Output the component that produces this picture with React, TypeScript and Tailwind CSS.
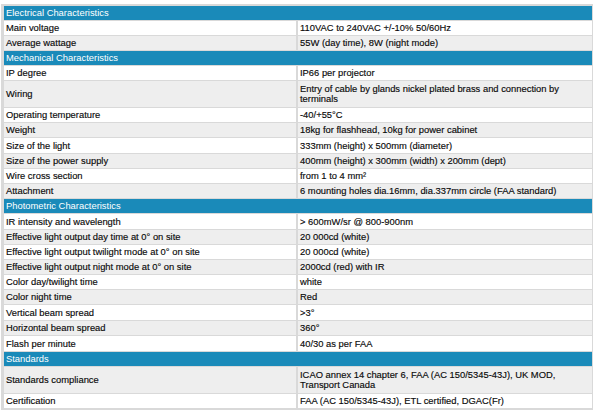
import React from "react";

type Row =
  | { kind: "h"; label: string; h: number }
  | { kind: "d"; label: string; value: React.ReactNode; h: number; alt: boolean };

const rows: Row[] = [
  { kind: "h", label: "Electrical Characteristics", h: 14 },
  { kind: "d", label: "Main voltage", value: "110VAC to 240VAC +/-10% 50/60Hz", h: 14, alt: false },
  { kind: "d", label: "Average wattage", value: "55W (day time), 8W (night mode)", h: 14, alt: true },
  { kind: "h", label: "Mechanical Characteristics", h: 14 },
  { kind: "d", label: "IP degree", value: "IP66 per projector", h: 14, alt: false },
  {
    kind: "d",
    label: "Wiring",
    value: (
      <>
        Entry of cable by glands nickel plated brass and connection by
        <br />
        terminals
      </>
    ),
    h: 26,
    alt: true,
  },
  { kind: "d", label: "Operating temperature", value: "-40/+55°C", h: 14, alt: false },
  { kind: "d", label: "Weight", value: "18kg for flashhead, 10kg for power cabinet", h: 14, alt: true },
  { kind: "d", label: "Size of the light", value: "333mm (height) x 500mm (diameter)", h: 15, alt: false },
  { kind: "d", label: "Size of the power supply", value: "400mm (height) x 300mm (width) x 200mm (dept)", h: 14, alt: true },
  { kind: "d", label: "Wire cross section", value: "from 1 to 4 mm²", h: 14, alt: false },
  { kind: "d", label: "Attachment", value: "6 mounting holes dia.16mm, dia.337mm circle (FAA standard)", h: 14, alt: true },
  { kind: "h", label: "Photometric Characteristics", h: 14 },
  { kind: "d", label: "IR intensity and wavelength", value: "> 600mW/sr @ 800-900nm", h: 15, alt: false },
  { kind: "d", label: "Effective light output day time at 0° on site", value: "20 000cd (white)", h: 14, alt: true },
  { kind: "d", label: "Effective light output twilight mode at 0° on site", value: "20 000cd (white)", h: 14, alt: false },
  { kind: "d", label: "Effective light output night mode at 0° on site", value: "2000cd (red) with IR", h: 14, alt: true },
  { kind: "d", label: "Color day/twilight time", value: "white", h: 14, alt: false },
  { kind: "d", label: "Color night time", value: "Red", h: 14, alt: true },
  { kind: "d", label: "Vertical beam spread", value: ">3°", h: 15, alt: false },
  { kind: "d", label: "Horizontal beam spread", value: "360°", h: 14, alt: true },
  { kind: "d", label: "Flash per minute", value: "40/30 as per FAA", h: 15, alt: false },
  { kind: "h", label: "Standards", h: 14 },
  {
    kind: "d",
    label: "Standards compliance",
    value: (
      <>
        ICAO annex 14 chapter 6, FAA (AC 150/5345-43J), UK MOD,
        <br />
        Transport Canada
      </>
    ),
    h: 26,
    alt: true,
  },
  { kind: "d", label: "Certification", value: "FAA (AC 150/5345-43J), ETL certified, DGAC(Fr)", h: 14, alt: false },
];

export default function App() {
  return (
    <div
      className="w-[600px] h-[420px] bg-white pt-[4px] pl-[1px]"
      style={{ fontFamily: '"Liberation Sans", Arial, sans-serif' }}
    >
      <div className="w-[592px] bg-[#d9d9d9] pt-[2px] pb-[2px] pl-[3px] pr-[1px] flex flex-col gap-px text-[9.4px] leading-[10px] text-[#0a0a0a]">
        {rows.map((r, i) =>
          r.kind === "h" ? (
            <div
              key={i}
              className="bg-[#1a8ab9] text-white flex items-center pl-[2px]"
              style={{ height: r.h }}
            >
              {r.label}
            </div>
          ) : (
            <div
              key={i}
              className="flex gap-[2px] [-webkit-text-stroke:0.15px_#0a0a0a]"
              style={{ height: r.h }}
            >
              <div
                className={`w-[292px] shrink-0 flex items-center pl-[2px] ${
                  r.alt ? "bg-[#eeeeee]" : "bg-white"
                }`}
              >
                {r.label}
              </div>
              <div
                className={`flex-1 flex items-center pl-[2px] ${
                  r.alt ? "bg-[#eeeeee]" : "bg-white"
                }`}
              >
                <div>{r.value}</div>
              </div>
            </div>
          )
        )}
      </div>
    </div>
  );
}
